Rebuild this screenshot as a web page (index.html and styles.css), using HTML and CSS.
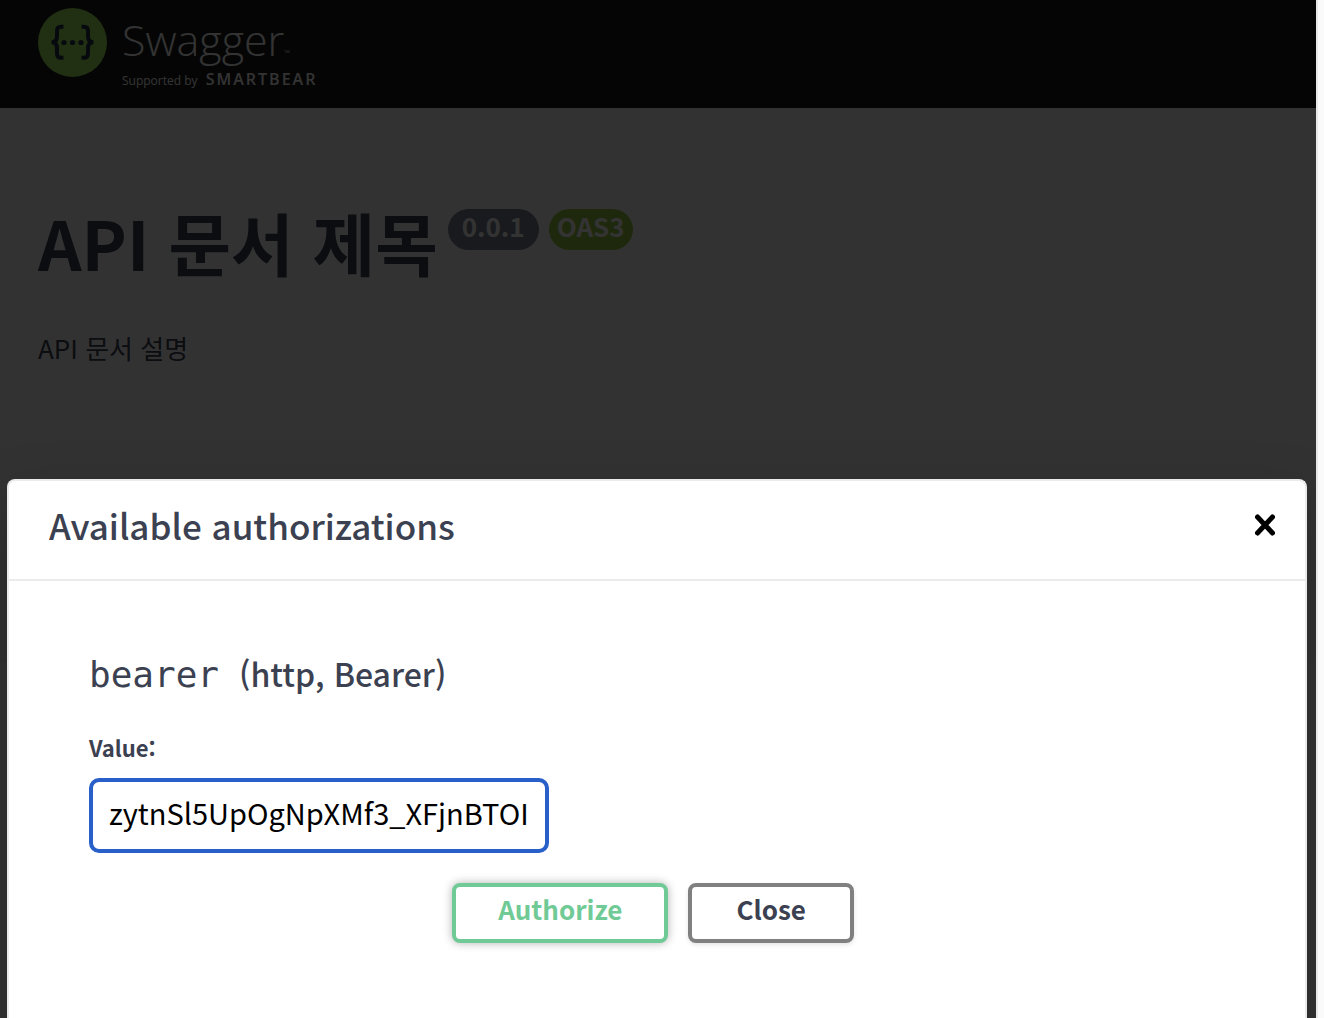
FILE: index.html
```html
<!DOCTYPE html>
<html lang="ko">
<head>
<meta charset="utf-8">
<title>API 문서 제목</title>
<link rel="stylesheet" href="styles.css">
</head>
<body>
<div class="frame">
  <div class="page">
    <header class="topbar">
      <a class="brand" href="#">
        <svg class="brand-mark" viewBox="0 0 69 69" aria-hidden="true">
          <circle cx="34.500" cy="34.500" r="34.500" fill="#a5e95a"/>
          <g fill="none" stroke="#1f3647" stroke-width="4">
            <path d="M25.500 18.800h-2.500q-4 0-4 4v5.500q0 6-5.500 6q5.500 0 5.500 6v5.500q0 4 4 4h2.500"/>
            <path d="M43.500 18.800h2.500q4 0 4 4v5.500q0 6 5.500 6q-5.500 0-5.500 6v5.500q0 4-4 4h-2.500"/>
          </g>
          <g fill="#1f3647"><circle cx="26" cy="34.500" r="2.600"/><circle cx="34.500" cy="34.500" r="2.600"/><circle cx="43" cy="34.500" r="2.600"/></g>
        </svg>
        <span class="brand-text">
          <span class="brand-name">Swagger<small class="brand-tm">™</small></span>
          <span class="brand-by">Supported by <b class="brand-owner">SMARTBEAR</b></span>
        </span>
      </a>
    </header>
    <main>
      <section class="info">
        <div class="title-row">
          <h1 class="title">API 문서 제목</h1>
          <span class="badge badge-version">0.0.1</span>
          <span class="badge badge-oas">OAS3</span>
        </div>
        <p class="description">API 문서 설명</p>
      </section>
      <section class="schemes"></section>
    </main>
    <div class="overlay">
      <div class="modal" role="dialog" aria-labelledby="modal-title">
        <div class="modal-header">
          <h3 class="modal-title" id="modal-title">Available authorizations</h3>
          <button class="modal-x" type="button" aria-label="Close dialog">
            <svg viewBox="0 0 20 22" width="20" height="22" aria-hidden="true"><path d="M2.500 3L17.500 19M17.500 3L2.500 19" stroke="#000" stroke-width="5" stroke-linecap="round"/></svg>
          </button>
        </div>
        <form class="auth">
          <h4 class="scheme"><code class="scheme-name">bearer</code><span>(http, Bearer)</span></h4>
          <label class="label" for="token">Value:</label>
          <input class="token" id="token" type="text" value="zytnSl5UpOgNpXMf3_XFjnBTOI">
          <div class="actions">
            <button class="btn btn-authorize" type="button">Authorize</button>
            <button class="btn btn-close" type="button">Close</button>
          </div>
        </form>
      </div>
    </div>
  </div>
  <div class="gutter"></div>
</div>
</body>
</html>
```
FILE: styles.css
```css
* { box-sizing: border-box; }

body {
  margin: 0;
  overflow: hidden;
  background: #fafafa;
  color: #3b4151;
  font-family: "Noto Sans CJK KR", sans-serif;
}

h1, h3, h4, p { margin: 0; }

.frame { display: flex; min-height: 100vh; }
.page { position: relative; flex: 1; overflow: hidden; }
.gutter { width: 8px; border-left: 2px solid #e8e8e8; }

.topbar { height: 108px; padding: 8px 38px; background: #1b1b1b; }
.brand { display: inline-flex; gap: 15px; color: #fff; text-decoration: none; }
.brand-mark { width: 69px; height: 69px; }
.brand-text { display: flex; flex-direction: column; font-family: "Open Sans", sans-serif; }
.brand-name { font-size: 43px; font-weight: 300; line-height: 64px; }
.brand-tm { font-size: 8px; line-height: 8px; }
.brand-by { font-size: 12px; line-height: 14px; }
.brand-owner { margin-left: 5px; font-size: 16px; font-weight: 600; letter-spacing: 2px; }

.info { height: 554px; padding: 98px 38px; }
.title-row { display: flex; align-items: flex-start; gap: 10px; }
.title { font-size: 68px; line-height: 72px; font-weight: 700; }
.badge {
  height: 41px;
  margin-top: 3px;
  border-radius: 21px;
  color: #fff;
  font-size: 26px;
  font-weight: 700;
  line-height: 34px;
}
.badge-version { padding: 0 14px; background: #7d8492; }
.badge-oas { padding: 0 8px; background: #98c83c; }
.description { padding-top: 50px; font-size: 26px; line-height: 40px; }

.schemes { height: 400px; background: #fff; box-shadow: 0 2px 4px rgba(0, 0, 0, .15); }

.overlay {
  position: absolute;
  inset: 0;
  display: flex;
  padding: 479px 9px 0 7px;
  background: rgba(0, 0, 0, .8);
}
.modal {
  flex: 1;
  border: 2px solid #ebebeb;
  border-bottom: 0;
  border-radius: 8px 8px 0 0;
  background: #fff;
  box-shadow: 0 20px 60px rgba(0, 0, 0, .2);
}
.modal-header {
  display: flex;
  align-items: center;
  justify-content: space-between;
  padding: 15px 30px 25px 40px;
  border-bottom: 2px solid #ebebeb;
}
.modal-title { font-size: 35px; font-weight: 500; line-height: 58px; }
.modal-x { display: flex; padding: 0; border: 0; background: none; }

.auth { display: flex; flex-direction: column; padding: 64px 88px 64px 80px; }
.scheme { display: flex; align-items: baseline; gap: 20px; font-size: 32px; font-weight: 500; line-height: 56px; }
.scheme-name { font-family: "DejaVu Sans Mono", monospace; font-size: 36px; font-weight: 400; }
.label { padding-top: 26px; font-size: 22px; font-weight: 700; line-height: 36px; }
.token {
  width: 460px;
  height: 75px;
  margin-top: 13px;
  padding: 0 14px 8px 16px;
  border: 4px solid #285fc8;
  border-radius: 10px;
  outline: 0;
  background: #fff;
  color: #000;
  font-family: inherit;
  font-size: 29px;
}
.actions { display: flex; justify-content: center; gap: 20px; padding-top: 30px; }
.btn {
  height: 60px;
  padding: 0 44px 10px;
  border: 4px solid #808080;
  border-radius: 8px;
  background: #fff;
  box-shadow: 0 2px 4px rgba(0, 0, 0, .1);
  color: #3b4151;
  font-family: inherit;
  font-size: 26px;
  font-weight: 700;
}
.btn-authorize { padding: 0 42px 10px; border-color: #70ca96; box-shadow: 0 0 10px rgba(0, 0, 0, .3); color: #70ca96; }
```
